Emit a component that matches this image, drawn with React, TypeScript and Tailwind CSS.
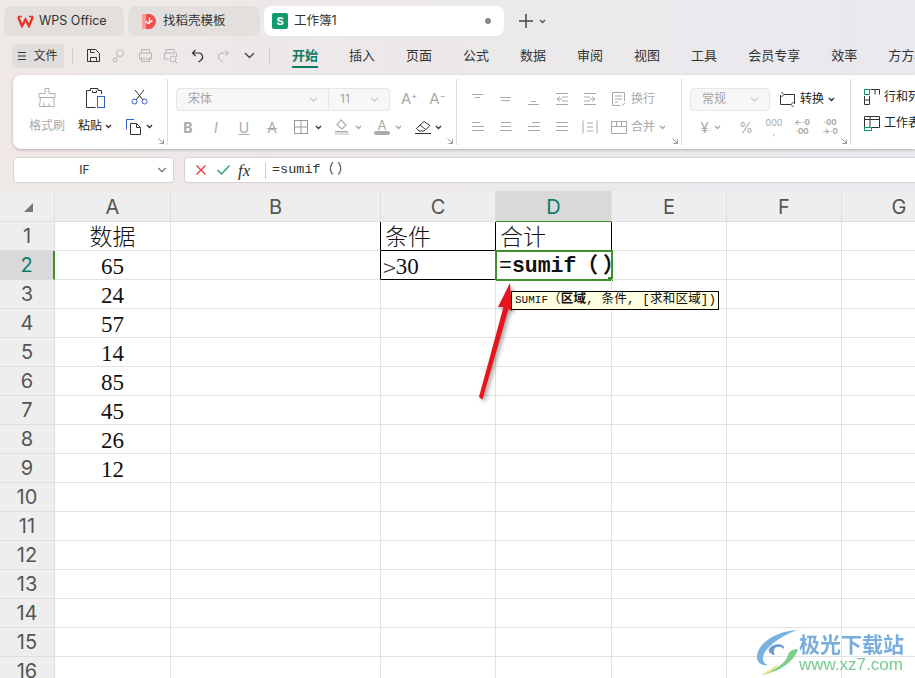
import type { ReactNode } from 'react';
import { ChevronDown } from 'lucide-react';

const SANS = "font-['Inter','Noto_Sans_CJK_SC',sans-serif]";

const MENU_ITEMS = ['插入', '页面', '公式', '数据', '审阅', '视图', '工具', '会员专享', '效率', '方方格子'];
const COL_HEADERS = ['A', 'B', 'C', 'D', 'E', 'F', 'G'];
const ROW_COUNT = 16;
const COL_A: Record<number, string> = {
  1: '数据', 2: '65', 3: '24', 4: '57', 5: '14', 6: '85', 7: '45', 8: '26', 9: '12',
};

function Icon({ w = 16, h = 16, className = '', children }: { w?: number; h?: number; className?: string; children: ReactNode }) {
  return (
    <svg width={w} height={h} viewBox={`0 0 ${w} ${h}`} fill="none" stroke="currentColor" strokeWidth="1" className={className}>
      {children}
    </svg>
  );
}

function Caret({ className = 'text-[#333]' }: { className?: string }) {
  return (
    <svg width="7" height="5" viewBox="0 0 7 5" fill="none" stroke="currentColor" strokeWidth="1.4" className={className}>
      <path d="M1 1l2.500 2.500L6 1" />
    </svg>
  );
}

// ribbon alignment icons are just stacks of short lines
function Lines({ rows }: { rows: [number, number, number][] }) {
  return (
    <Icon w={16} h={16} className="text-[#a9a9a9]">
      {rows.map(([x1, x2, y], i) => (
        <path key={i} d={`M${x1} ${y}.5H${x2}`} />
      ))}
    </Icon>
  );
}

function CornerMark() {
  return (
    <svg width="6" height="6" viewBox="0 0 6 6" fill="none" stroke="currentColor" strokeWidth="1" className="absolute right-[3px] bottom-[1px] text-[#999]">
      <path d="M0.500 0.500l5 5M5.500 1.500v4h-4" />
    </svg>
  );
}

function Cell({ w, children }: { w: number; children: ReactNode }) {
  return (
    <div className="flex items-center justify-center shrink-0" style={{ width: w }}>
      {children}
    </div>
  );
}

function Tabs() {
  return (
    <div className="flex items-center h-[30px] mt-[6px] pl-[4px] gap-[4px] text-[12px] text-[#333]">
      <div className="flex items-center w-[120px] h-[30px] rounded-lg bg-[#e3dfdd] pl-[13px] gap-[5px]">
        <svg width="17" height="13" viewBox="0 0 17 13" fill="none" stroke="#e8342a" strokeWidth="2.400">
          <path d="M1.200 2l3.800 9 3.500-6.500L12 11l3.800-9" />
          <path d="M1 1.500h4M12 1.500h4" strokeWidth="1.600" />
        </svg>
        <span className="text-[12.500px]">WPS Office</span>
      </div>
      <div className="flex items-center w-[132px] h-[30px] rounded-lg bg-[#e3dfdd] pl-[14px] gap-[7px]">
        <svg width="14" height="15" viewBox="0 0 14 15">
          <path d="M0 0h7a7 7.500 0 0 1 0 15H0z" fill="#ee4f4f" />
          <path d="M0 0h4v15H0z" fill="#f4a09a" />
          <path d="M7.500 3.500v6M7.500 9.500c-2 0-3-1-3-2.500M7.500 8c1.500 0 2.500-.8 2.500-2" stroke="#fff" strokeWidth="1.300" fill="none" />
        </svg>
        <span className="text-[12.500px]">找稻壳模板</span>
      </div>
      <div className="flex items-center w-[240px] h-[30px] rounded-lg bg-white pl-[8px] gap-[6px]">
        <div className="flex items-center justify-center w-[16px] h-[16px] rounded-[2px] bg-[#0f9d70] text-white text-[11px] font-bold">S</div>
        <span className="text-[12.500px]">工作簿1</span>
        <div className="ml-auto mr-[13px] w-[6px] h-[6px] rounded-full bg-[#888]" />
      </div>
      <svg width="14" height="14" viewBox="0 0 14 14" stroke="#444" strokeWidth="1.500" className="ml-[11px]">
        <path d="M7 0v14M0 7h14" />
      </svg>
      <Caret className="text-[#555] ml-[2px]" />
    </div>
  );
}

function MenuBar() {
  return (
    <div className="flex items-center h-[25px] mt-[7px] pl-[12px] text-[13px] text-[#333] whitespace-nowrap">
      <div className="flex items-center justify-center shrink-0 w-[52px] h-[24px] rounded bg-[#e0dedc] gap-[6px]">
        <svg width="9" height="10" viewBox="0 0 9 10" stroke="#333">
          <path d="M0 1.500h8M0 5h8M0 8.500h8" />
        </svg>
        <span className="text-[12px]">文件</span>
      </div>
      <div className="w-px h-[17px] bg-[#cfcccb] ml-[8px] shrink-0" />
      <div className="flex items-center shrink-0 ml-[7px]">
        <Cell w={26}>
          <Icon w={15} h={15} className="text-[#333]"><path d="M1.500 1.500h8l4 4v8h-12zM4.500 13.500v-4h6v4M4.500 1.500v3h4" /></Icon>
        </Cell>
        <Cell w={26}>
          <Icon w={14} h={15} className="text-[#b5b5b5]"><circle cx="8" cy="5" r="3.500" /><path d="M6 8l-3 3" /><circle cx="3" cy="12" r="2" /></Icon>
        </Cell>
        <Cell w={26}>
          <Icon w={15} h={15} className="text-[#b5b5b5]"><path d="M3.500 5V1.500h8V5M1.500 5h12v6h-12zM3.500 9v4.500h8V9" /></Icon>
        </Cell>
        <Cell w={26}>
          <Icon w={16} h={16} className="text-[#b5b5b5]"><path d="M3 5V1.500h8V5M1.500 5h12v4M1.500 5v6h4" /><circle cx="10" cy="11" r="3" /><path d="M12 13l2.500 2.500" /></Icon>
        </Cell>
        <Cell w={26}>
          <Icon w={13} h={14} className="text-[#333]"><path d="M4.500 1L1.500 4l3 3M1.500 4H8a4 4 0 0 1 1.500 7.500l-2 1.500" strokeWidth="1.200" /></Icon>
        </Cell>
        <Cell w={26}>
          <Icon w={13} h={14} className="text-[#b5b5b5]"><path d="M8.500 1l3 3-3 3M11.500 4H5a4 4 0 0 0-1.500 7.500l2 1.500" /></Icon>
        </Cell>
        <Cell w={26}>
          <svg width="11" height="7" viewBox="0 0 11 7" fill="none" stroke="#444" strokeWidth="1.400"><path d="M1 1l4.500 4.500L10 1" /></svg>
        </Cell>
      </div>
      <div className="w-px h-[17px] bg-[#cfcccb] ml-[7px] shrink-0" />
      <div className="flex items-center gap-[31px] ml-[22px] shrink-0">
        <div className="relative font-bold text-[#0b7a66]">
          开始
          <div className="absolute left-0 right-0 -bottom-[3px] h-[2px] bg-[#0b7a66]" />
        </div>
        {MENU_ITEMS.map((item) => (
          <span key={item}>{item}</span>
        ))}
      </div>
    </div>
  );
}

function ComboBox({ w, label, className = '' }: { w: number; label: string; className?: string }) {
  return (
    <div className={`flex items-center justify-between h-[23px] px-[11px] bg-[#f7f7f7] border border-[#e6e6e6] text-[12px] text-[#a3a3a3] ${className}`} style={{ width: w }}>
      {label}
      <ChevronDown size={13} className="text-[#c4c4c4] -mr-[3px]" />
    </div>
  );
}

function Ribbon() {
  const gray = 'text-[#aaa]';
  return (
    <div className="flex h-[74px] mt-[7px] ml-[13px] rounded-l-lg bg-white shadow-[0_1px_3px_rgba(0,0,0,0.25)] text-[12px] whitespace-nowrap overflow-hidden">
      {/* clipboard */}
      <div className="relative flex w-[155px] my-[4px] border-r border-[#dcdcdc] pl-[16px] shrink-0">
        <div className="flex flex-col items-center w-[36px]">
          <div className="flex items-center h-[28px] mt-[4px]">
            <Icon w={20} h={21} className="text-[#b0b0b0]"><path d="M8 1.500h4v5h6v4H2v-4h6zM3.500 10.500l-1 9h15l-1-9M7 19.500v-4M12 19.500v-3" /></Icon>
          </div>
          <div className="flex items-center h-[30px] text-[#a9a9a9]">格式刷</div>
        </div>
        <div className="flex flex-col items-center w-[48px] ml-[6px]">
          <div className="flex items-center h-[28px] mt-[4px]">
            <Icon w={21} h={21} className="text-[#333]">
              <path d="M5.500 3.500h-4v17h9M13 3.500h3.500V7M5.500 3.500v-2h7.500v2" />
              <rect x="12.500" y="9.500" width="7" height="11" stroke="#2f5fd0" />
              <path d="M7.500 3.500v2h4v-2" />
            </Icon>
          </div>
          <div className="flex items-center h-[30px] gap-[3px] text-[#222]">粘贴<Caret /></div>
        </div>
        <div className="flex flex-col items-center w-[40px]">
          <div className="flex items-center h-[28px] mt-[4px]">
            <Icon w={17} h={16} className="text-[#333]">
              <path d="M4 1l8 10M13 1l-8 10" />
              <circle cx="3.500" cy="12.500" r="2.500" stroke="#2f5fd0" />
              <circle cx="13.500" cy="12.500" r="2.500" stroke="#2f5fd0" />
            </Icon>
          </div>
          <div className="flex items-center h-[30px] gap-[4px]">
            <Icon w={17} h={17} className="text-[#333]">
              <path d="M9 1.500H1.500v10" stroke="#2f5fd0" />
              <path d="M5.500 5.500h6l4 4v7h-10zM11.500 5.500v4h4" />
            </Icon>
            <Caret />
          </div>
        </div>
        <CornerMark />
      </div>

      {/* font */}
      <div className="relative flex flex-col w-[289px] my-[4px] border-r border-[#dcdcdc] pl-[8px] pt-[6px] shrink-0">
        <div className="flex items-center h-[28px]">
          <ComboBox w={153} label="宋体" className="rounded-l" />
          <ComboBox w={61} label="11" className="rounded-r border-l-0" />
          <span className={`ml-[11px] text-[15px] ${gray}`}>A<sup className="text-[9px]">+</sup></span>
          <span className={`ml-[12px] text-[15px] ${gray}`}>A<sup className="text-[9px]">−</sup></span>
        </div>
        <div className="flex items-center h-[28px] text-[#aaa] -ml-[2px]">
          <Cell w={28}><span className="font-bold text-[14px]">B</span></Cell>
          <Cell w={28}><span className="italic text-[14px]">I</span></Cell>
          <Cell w={28}><span className="underline text-[14px]">U</span></Cell>
          <Cell w={28}><span className="line-through text-[14px]">A</span></Cell>
          <span className="flex items-center gap-[7px] ml-[8px]">
            <Icon w={14} h={14} className="text-[#999]"><rect x="0.500" y="0.500" width="13" height="13" /><path d="M7 0.500v13M0.500 7h13" /></Icon>
            <Caret />
          </span>
          <span className="flex items-center gap-[5px] ml-[12px]">
            <Icon w={16} h={16} className="text-[#aaa]"><path d="M7 1l5 5-4 4-5-4zM1 12.500h13" strokeWidth="1.200" /><path d="M1 14.500h14" stroke="#ddd" strokeWidth="3" /></Icon>
            <Caret className="text-[#aaa]" />
          </span>
          <span className="flex items-center gap-[5px] ml-[12px]">
            <span className="flex flex-col items-center w-[16px] leading-[11px] text-[13px]">A<span className="w-[16px] h-[4px] rounded-sm bg-[#aaa]" /></span>
            <Caret className="text-[#aaa]" />
          </span>
          <span className="flex items-center gap-[3px] ml-[12px]">
            <Icon w={18} h={15} className="text-[#333]"><path d="M10 1.500l6 4-6 5.500H5L2.500 8.500zM6 5l5 4M1 13.500h16" /></Icon>
            <Caret />
          </span>
        </div>
        <CornerMark />
      </div>

      {/* alignment */}
      <div className="relative flex flex-col w-[225px] my-[4px] border-r border-[#dcdcdc] pl-[7px] pt-[6px] shrink-0">
        <div className="flex items-center h-[28px]">
          <Cell w={28}><Lines rows={[[2, 13, 3], [5, 10, 6]]} /></Cell>
          <Cell w={28}><Lines rows={[[2, 13, 6], [3, 12, 9]]} /></Cell>
          <Cell w={28}><Lines rows={[[5, 10, 10], [2, 13, 13]]} /></Cell>
          <Cell w={28}>
            <Icon w={14} h={14} className="text-[#a9a9a9]"><path d="M1 1.500h12M1 12.500h12M7 5h6M7 9h6M5 4.500L2 7l3 2.500M2 7h5" /></Icon>
          </Cell>
          <Cell w={28}>
            <Icon w={14} h={14} className="text-[#a9a9a9]"><path d="M1 1.500h12M1 12.500h12M1 5h6M1 9h6M9 4.500L12 7 9 9.500M12 7H7" /></Icon>
          </Cell>
          <div className="flex items-center gap-[4px] ml-[7px] text-[#a9a9a9]">
            <Icon w={16} h={16}><path d="M13.500 10V1.500h-12v13h8M4 5h7M4 8h7M4 11h3M14 12l-3 2.500" /></Icon>
            换行
          </div>
        </div>
        <div className="flex items-center h-[28px]">
          <Cell w={28}><Lines rows={[[2, 10, 3], [2, 14, 7], [2, 14, 11]]} /></Cell>
          <Cell w={28}><Lines rows={[[3, 13, 3], [3, 13, 7], [2, 14, 11]]} /></Cell>
          <Cell w={28}><Lines rows={[[6, 14, 3], [2, 14, 7], [2, 14, 11]]} /></Cell>
          <Cell w={28}><Lines rows={[[2, 14, 3], [2, 14, 7], [2, 14, 11]]} /></Cell>
          <Cell w={28}>
            <Icon w={16} h={14} className="text-[#a9a9a9]"><path d="M1 .5v13M15 .5v13M5 3h6M5 7h6M5 11h6" /></Icon>
          </Cell>
          <div className="flex items-center gap-[4px] ml-[7px] text-[#a9a9a9]">
            <Icon w={16} h={15}><rect x="0.500" y="1.500" width="15" height="12" /><path d="M5.500 1.500v5M10.500 1.500v5M0.500 6.500h15" /></Icon>
            合并
            <Caret className="text-[#aaa]" />
          </div>
        </div>
        <CornerMark />
      </div>

      {/* number */}
      <div className="relative flex flex-col w-[169px] my-[4px] border-r border-[#dcdcdc] pl-[8px] pt-[6px] shrink-0">
        <div className="flex items-center h-[28px]">
          <ComboBox w={80} label="常规" className="rounded" />
          <Icon w={17} h={17} className="text-[#333] ml-[9px]"><path d="M2.500 1l2.500 2.500H15.500V13M5 3.500l-2.500 2.500M14.500 16L12 13.500H1.500V4M12 13.500l2.500-2.500" /></Icon>
          <span className="ml-[4px] text-[#222]">转换</span>
          <Caret className="text-[#333] ml-[4px]" />
        </div>
        <div className="flex items-center h-[28px] text-[#aaa]">
          <Cell w={42}>
            <span className="flex items-center gap-[6px] text-[14px] text-[#aaa]">¥<Caret className="text-[#aaa]" /></span>
          </Cell>
          <Cell w={28}><span className="text-[14px]">%</span></Cell>
          <Cell w={28}><span className="flex flex-col items-center text-[9px] leading-[9px]">000<span>,</span></span></Cell>
          <Cell w={28}><span className="flex flex-col items-center text-[8px] leading-[9px] font-bold">←·0<span>·00</span></span></Cell>
          <Cell w={28}><span className="flex flex-col items-center text-[8px] leading-[9px] font-bold">·00<span>→·0</span></span></Cell>
        </div>
        <CornerMark />
      </div>

      {/* cells */}
      <div className="flex flex-col pl-[13px] pt-[10px] text-[#222] shrink-0">
        <div className="flex items-center h-[24px] gap-[4px]">
          <Icon w={16} h={16} className="text-[#333]"><rect x="0.500" y="0.500" width="5" height="5" stroke="#0f9d70" /><path d="M6.500 0.500h9v5M11 0.500v5M0.500 7v8.500h5V7M0.500 11h5" /></Icon>
          行和列
        </div>
        <div className="flex items-center h-[28px] gap-[4px]">
          <Icon w={16} h={16} className="text-[#333]"><path d="M0.500 12V1.500h15v11h-15M0.500 4.500h15M6 1.500v11" /><rect x="0.500" y="12.500" width="7" height="3" stroke="#0f9d70" /></Icon>
          工作表
        </div>
      </div>
    </div>
  );
}

function FormulaBar() {
  return (
    <div className="flex h-[26px] mt-[8px] ml-[13px] gap-[10px]">
      <div className="relative flex items-center justify-center w-[161px] pr-[18px] rounded bg-white border border-[#d4d4d4] text-[12px] text-[#333]">
        IF
        <ChevronDown size={14} className="absolute right-[4px] text-[#777]" />
      </div>
      <div className="flex flex-1 items-center rounded-l bg-white border border-[#d4d4d4] border-r-0 pl-[11px]">
        <svg width="10" height="10" viewBox="0 0 10 10" stroke="#d9363e" strokeWidth="1.200"><path d="M.5.500l9 9M9.500.500l-9 9" /></svg>
        <svg width="13" height="10" viewBox="0 0 13 10" fill="none" stroke="#2b9a6b" strokeWidth="1.300" className="ml-[11px]"><path d="M.5 5l4 4L12.500.5" /></svg>
        <span className="ml-[8px] w-[17px] font-['Liberation_Serif',serif] italic text-[17px] leading-none text-[#333]">fx</span>
        <div className="w-px h-[17px] bg-[#ccc] ml-[10px]" />
        <span className="ml-[6px] font-['Liberation_Mono','Noto_Sans_CJK_SC',monospace] text-[13.500px] text-[#333]">
          =sumif（<span className="ml-[3px]">）</span>
        </span>
      </div>
    </div>
  );
}

function Row({ row }: { row: number }) {
  const cellBase = 'relative border-r border-b border-[#e2e2e2]';
  const textCls = "flex items-center h-full pt-[3px] font-['Liberation_Serif','Noto_Sans_CJK_SC',serif] text-[23px] leading-none text-[#111] font-light";
  const selected = row === 2;

  return (
    <>
      <div
        className={`flex items-center justify-center border-b text-[20px] ${SANS} ${
          selected
            ? 'bg-[#d9d9d9] text-[#0b7d6c] border-b-[#dedede] border-r-2 border-r-[#3f8f2a]'
            : 'bg-[#eeeeee] text-[#555] border-r border-[#dedede]'
        }`}
      >
        {row}
      </div>
      {/* A */}
      <div className={cellBase}>
        {COL_A[row] && <div className={`${textCls} justify-center`}>{COL_A[row]}</div>}
      </div>
      {/* B */}
      <div className={`${cellBase} ${row <= 2 ? 'border-r-black' : ''}`} />
      {/* C */}
      <div className={`${cellBase} ${row <= 2 ? 'border-r-black border-b-black' : ''}`}>
        {row === 1 && <div className={`${textCls} pl-[4px] text-[22px]`}>条件</div>}
        {row === 2 && (
          <div className={`${textCls} pl-[2px]`}>
            <span className="font-['Noto_Sans_CJK_SC',sans-serif] font-light text-[24px] text-[#333]">&gt;</span>30
          </div>
        )}
      </div>
      {/* D */}
      <div className={`${cellBase} ${row === 1 ? 'border-r-black border-b-black' : ''}`}>
        {row === 1 && <div className={`${textCls} pl-[4px] text-[22px]`}>合计</div>}
        {selected && (
          <>
            <div className="absolute -left-px -top-px w-[118px] h-[31px] border-2 border-[#3f8f2a]" />
            <div className="absolute right-[-2px] bottom-[-2px] w-[5px] h-[4px] bg-[#3f8f2a]" />
            <div className="flex items-center h-full pt-[3px] pl-[3px] font-['Liberation_Mono','Noto_Sans_CJK_SC',monospace] text-[21.500px] font-bold leading-none text-[#111] whitespace-nowrap">
              <span className="font-normal">=</span>sumif（<span className="ml-[5px]">）</span>
            </div>
            <div className="absolute z-10 left-[15px] top-[40px] flex items-center h-[19px] pl-[3px] pr-[2px] bg-[#ffffe1] border border-black font-['Liberation_Mono','Noto_Sans_CJK_SC',monospace] text-[11px] text-[#111] whitespace-nowrap">
              SUMIF<span className="text-[12.500px] tracking-[0.2px]">（<b>区域</b>, 条件, [求和区域])</span>
            </div>
          </>
        )}
      </div>
      {/* E F G */}
      <div className={cellBase} />
      <div className={cellBase} />
      <div className={cellBase} />
    </>
  );
}

function Sheet() {
  return (
    <div className="relative mt-[8px] flex-1 overflow-hidden bg-white">
      <div className="grid grid-cols-[55px_116px_210px_115px_116px_115px_115px_115px] grid-rows-[31px_repeat(16,29px)] w-[957px]">
        {/* header row */}
        <div className="flex items-center justify-center bg-[#eeeeee] border-r border-b border-[#dedede]">
          <svg width="9" height="9" viewBox="0 0 9 9" className="ml-[2px] mt-[2px]"><path d="M9 0v9H0z" fill="#777" /></svg>
        </div>
        {COL_HEADERS.map((col) => (
          <div
            key={col}
            className={`flex items-center justify-center border-r border-b text-[20px] pt-[2px] ${SANS} ${
              col === 'D'
                ? 'bg-[#d9d9d9] text-[#0b7d6c] border-r-[#dedede] border-b-[#3f8f2a]'
                : 'bg-[#eeeeee] text-[#555] border-[#dedede]'
            }`}
          >
            {col}
          </div>
        ))}

        {Array.from({ length: ROW_COUNT }, (_, i) => i + 1).map((row) => (
          <Row key={row} row={row} />
        ))}
      </div>

      {/* arrow pointing at the formula cell */}
      <svg width="50" height="125" viewBox="0 0 50 125" className="absolute left-[470px] top-[89px] drop-shadow-[2px_2px_2px_rgba(0,0,0,0.4)]">
        <path d="M40 3L28 27l5.500 0L9 117l3.500 2.500L38.500 29l3.500 2z" fill="#e8141c" />
      </svg>

      {/* watermark */}
      <div className="absolute left-[755px] top-[436px] flex items-center opacity-90">
        <svg width="45" height="50" viewBox="0 0 45 50" fill="none">
          <path d="M42 3C22 4 2 16 2 30c0 6 5 9 11 8C6 36 6 28 14 20 22 12 32 7 42 3z" fill="#6ba9dc" />
          <path d="M20 28c-6-1-9-5-3-9 5-3 13-2 12 3-3-3-9-3-10 1 0 2 0 4 1 5z" fill="#5f8fd0" />
          <path d="M43 22c-3 11-16 22-36 26 14-6 24-12 26-20 1-4 5-6 10-6z" fill="#6ccb7c" />
          <path d="M25 36c-7 5-14 9-19 12 8-1 12-4 19-12z" fill="#e6e27a" />
        </svg>
        <div className="flex flex-col -ml-[1px]">
          <span className="font-['Noto_Sans_CJK_SC',sans-serif] font-bold text-[21px] leading-[26px] text-[#6aa5d9] whitespace-nowrap">极光下载站</span>
          <span className="font-['Liberation_Sans',sans-serif] text-[17px] leading-[18px] text-[#68c583] whitespace-nowrap">www.xz7.com</span>
        </div>
      </div>
    </div>
  );
}

export default function App() {
  return (
    <div className={`flex flex-col w-[915px] h-[678px] overflow-hidden bg-gradient-to-r from-[#efe8e6] to-[#e9e9ee] ${SANS}`}>
      <Tabs />
      <MenuBar />
      <Ribbon />
      <FormulaBar />
      <Sheet />
    </div>
  );
}
